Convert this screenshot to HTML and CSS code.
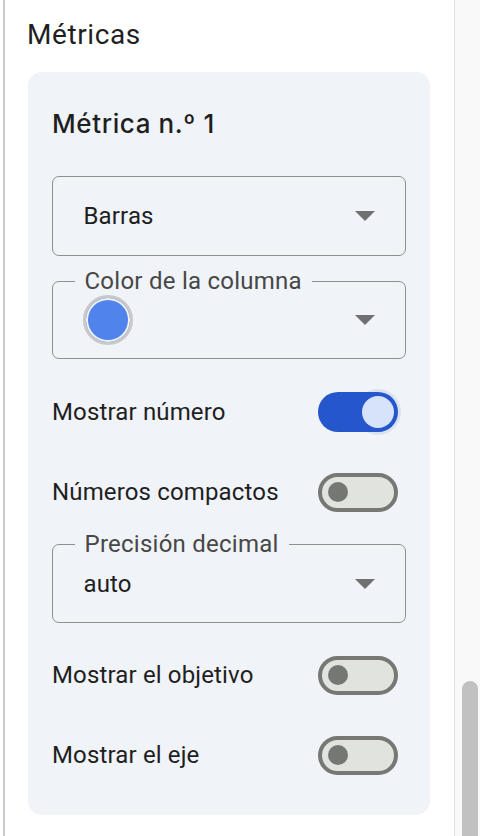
FILE: index.html
```html
<!DOCTYPE html>
<html lang="es">
<head>
<meta charset="utf-8">
<title>Métricas</title>
<link rel="stylesheet" href="styles.css">
</head>
<body>
<div class="page">
  <main class="main">
    <h2 class="section-title">Métricas</h2>
    <section class="card">
      <h3 class="card-title">Métrica n.º 1</h3>

      <div class="select">
        <span class="select-value">Barras</span>
        <svg class="arrow" width="20" height="10" viewBox="0 0 20 10"><polygon points="0,0 20,0 10,10" fill="#707070"/></svg>
      </div>

      <div class="select notched mt-25">
        <span class="float-label">Color de la columna</span>
        <span class="swatch"></span>
        <svg class="arrow" width="20" height="10" viewBox="0 0 20 10"><polygon points="0,0 20,0 10,10" fill="#707070"/></svg>
      </div>

      <div class="row mt-13">
        <span class="row-label">Mostrar número</span>
        <span class="switch on"><span class="thumb"></span></span>
      </div>

      <div class="row">
        <span class="row-label">Números compactos</span>
        <span class="switch off"><span class="thumb"></span></span>
      </div>

      <div class="select notched decimal mt-12">
        <span class="float-label">Precisión decimal</span>
        <span class="select-value">auto</span>
        <svg class="arrow" width="20" height="10" viewBox="0 0 20 10"><polygon points="0,0 20,0 10,10" fill="#707070"/></svg>
      </div>

      <div class="row mt-12">
        <span class="row-label">Mostrar el objetivo</span>
        <span class="switch off"><span class="thumb"></span></span>
      </div>

      <div class="row">
        <span class="row-label">Mostrar el eje</span>
        <span class="switch off"><span class="thumb"></span></span>
      </div>
    </section>
  </main>
  <aside class="side">
    <div class="scroll-thumb"></div>
  </aside>
</div>
</body>
</html>
```

FILE: styles.css
```css
html, body {
  margin: 0;
  padding: 0;
  background: #ffffff;
}

body {
  font-family: Roboto, "Liberation Sans", Arial, sans-serif;
  color: #1f1f1f;
}

.page {
  display: flex;
  height: 836px;
  overflow: hidden;
}

.main {
  width: 449px;
  margin-left: 3px;
  border-left: 2px solid #c9c9c9;
  background: #ffffff;
}

.section-title {
  margin: 0;
  padding: 17px 0 0 22px;
  font-size: 28px;
  line-height: 36px;
  font-weight: 400;
  letter-spacing: 0.6px;
  color: #1f1f1f;
}

.card {
  margin: 19px 0 0 23px;
  width: 402px;
  box-sizing: border-box;
  padding: 36px 24px 20px 24px;
  background: #f0f3f8;
  border-radius: 14px;
  display: flex;
  flex-direction: column;
}

.card-title {
  margin: 0 0 36px 0;
  font-family: Inter, Roboto, "Liberation Sans", sans-serif;
  font-size: 26px;
  line-height: 32px;
  font-weight: 500;
  letter-spacing: 0.6px;
  color: #1f1f1f;
}

.select {
  position: relative;
  height: 80px;
  box-sizing: border-box;
  border: 1.5px solid #8f8f8f;
  border-radius: 7px;
  padding: 0 30.5px;
  display: flex;
  align-items: center;
  justify-content: space-between;
}

.select.notched {
  height: 78px;
}

.select.decimal {
  height: 79px;
}

.select-value {
  font-size: 24px;
  line-height: 28px;
  letter-spacing: 0.15px;
  color: #1f1f1f;
}

.float-label {
  position: absolute;
  left: 21.5px;
  top: -15px;
  padding: 0 10px;
  font-size: 24px;
  line-height: 28px;
  letter-spacing: 0.25px;
  color: #474747;
  background: #f0f3f8;
}

.arrow {
  display: block;
  flex: none;
}

.swatch {
  width: 50px;
  height: 50px;
  box-sizing: border-box;
  margin-left: -1px;
  border-radius: 50%;
  border: 3px solid #c8c8c8;
  background: #5084ec;
  box-shadow: inset 0 0 0 2px #f0f3f8;
}

.mt-25 { margin-top: 25px; }
.mt-13 { margin-top: 13px; }
.mt-12 { margin-top: 12px; }

.row {
  height: 80px;
  display: flex;
  align-items: center;
  justify-content: space-between;
}

.row-label {
  font-size: 24px;
  line-height: 28px;
  letter-spacing: 0.15px;
  color: #1f1f1f;
}

.switch {
  width: 80px;
  height: 40px;
  box-sizing: border-box;
  border-radius: 20px;
  margin-right: 8px;
  display: flex;
  align-items: center;
  flex: none;
}

.switch.on {
  background: #2556cc;
  justify-content: flex-end;
  padding: 0 4px;
}

.switch.on .thumb {
  width: 32px;
  height: 32px;
  border-radius: 50%;
  background: #d7e2fb;
  box-shadow: 0 0 0 7px rgba(37, 86, 204, 0.1);
}

.switch.off {
  background: #e1e3df;
  border: 4px solid #777873;
  padding: 0 6px;
  height: 39px;
}

.switch.off .thumb {
  width: 20px;
  height: 20px;
  border-radius: 50%;
  background: #757772;
}

.side {
  flex: 1;
  border-left: 1px solid #e3e3e3;
  background: #f9f9f9;
  display: flex;
  flex-direction: column;
  justify-content: flex-end;
  padding: 0 2px 0 7px;
}

.scroll-thumb {
  height: 155px;
  background: #c1c1c1;
  border-radius: 8px 8px 0 0;
}
```
